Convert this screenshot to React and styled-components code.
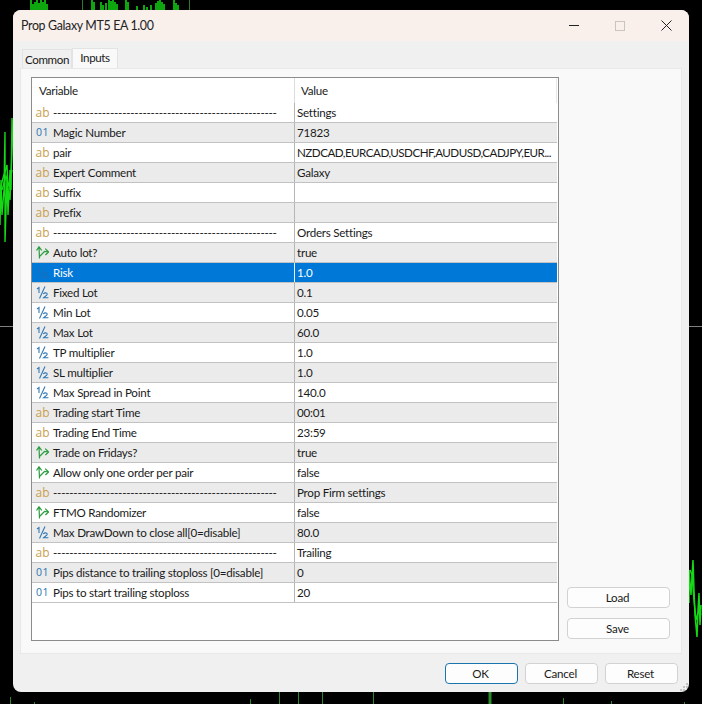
import React from "react";
import styled, { createGlobalStyle } from "styled-components";

const Global = createGlobalStyle`
  html, body { margin: 0; padding: 0; background: #000; }
  body { width: 702px; height: 704px; overflow: hidden; font-family: Lato, "Open Sans", sans-serif; }
`;

const Desktop = styled.div`
  position: relative;
  width: 702px;
  height: 704px;
  background: #000;
  overflow: hidden;
`;

const ChartLayer = styled.svg`
  position: absolute;
  inset: 0;
`;

const Dialog = styled.div`
  position: absolute;
  left: 13px;
  top: 10px;
  width: 676px;
  height: 682px;
  border-radius: 8px;
  overflow: hidden;
  background: #f0f0f0;
  display: flex;
  flex-direction: column;
  color: #1a1a1a;
  font-size: 11.6px;
  letter-spacing: -0.24px;
`;

const TitleBar = styled.div`
  height: 31px;
  background: #f9efeb;
  display: flex;
  align-items: center;
  padding-left: 8px;
  flex: none;
`;

const Title = styled.div`
  flex: 1;
  font-size: 12.4px;
  letter-spacing: -0.34px;
  color: #222;
`;

const Caption = styled.button`
  width: 46px;
  height: 31px;
  border: 0;
  padding: 0;
  background: none;
  display: flex;
  align-items: center;
  justify-content: center;
`;

const Tabs = styled.div`
  height: 27px;
  display: flex;
  align-items: flex-end;
  padding-left: 9px;
  flex: none;
`;

const Tab = styled.div`
  height: ${(p) => (p.$active ? 20 : 19)}px;
  width: ${(p) => p.$w}px;
  box-sizing: border-box;
  background: ${(p) => (p.$active ? "#f9f9f9" : "#f0f0f0")};
  border: 1px solid #e3e3e3;
  border-bottom: 0;
  display: flex;
  align-items: center;
  justify-content: center;
  letter-spacing: -0.4px;
  padding-bottom: ${(p) => (p.$active ? 3 : 0)}px;
`;

const Panel = styled.div`
  margin: 0 7px;
  height: 586px;
  box-sizing: border-box;
  background: #f9f9f9;
  border: 1px solid #e8e8e8;
  padding: 8px 10px 12px 10px;
  display: flex;
  gap: 8px;
  flex: none;
`;

const List = styled.div`
  width: 528px;
  height: 564px;
  box-sizing: border-box;
  border: 1px solid #8b8b8b;
  background: #fff;
  flex: none;
`;

const Head = styled.div`
  height: 25px;
  width: 525px;
  display: grid;
  grid-template-columns: 262px 263px;
  line-height: 25px;
`;

const HeadCell = styled.div`
  padding-left: ${(p) => p.$pad}px;
  height: 25px;
  box-sizing: border-box;
  border-left: ${(p) => (p.$div ? "1px solid #dcdcdc" : "0")};
  border-right: ${(p) => (p.$div ? "1px solid #e8e8e8" : "0")};
  color: #222;
`;

const Row = styled.div`
  height: 20px;
  width: 525px;
  box-sizing: border-box;
  display: grid;
  grid-template-columns: 262px 263px;
  border-bottom: 1px solid #c2c2c2;
  background: ${(p) => (p.$sel ? "#0078d7" : p.$alt ? "#ebebeb" : "#fff")};
  color: ${(p) => (p.$sel ? "#fff" : "#1a1a1a")};
  line-height: 19px;
`;

const NameCell = styled.div`
  display: flex;
  align-items: center;
  padding-left: 4px;
  gap: 4px;
  white-space: nowrap;
  overflow: hidden;
`;

const ValueCell = styled.div`
  border-left: 1px solid ${(p) => (p.$sel ? "#e9f2fb" : "#b5b5b5")};
  padding-left: 2px;
  white-space: nowrap;
  overflow: hidden;
  letter-spacing: ${(p) => (p.$long ? "-0.5px" : "inherit")};
`;

const IconBox = styled.span`
  width: 13px;
  height: 13px;
  flex: none;
  display: flex;
  align-items: center;
  justify-content: center;
`;

const Side = styled.div`
  flex: 1;
  display: flex;
  flex-direction: column;
  justify-content: flex-end;
  gap: 10px;
  padding-bottom: 2px;
`;

const Btn = styled.button`
  box-sizing: border-box;
  height: 21px;
  width: ${(p) => p.$w || 103}px;
  background: #fdfdfd;
  border: 1px solid ${(p) => (p.$primary ? "#1a74ae" : "#d2d2d2")};
  border-radius: 4px;
  font: inherit;
  letter-spacing: inherit;
  color: #1a1a1a;
  padding: 0 2px 0 0;
`;

const Footer = styled.div`
  flex: 1;
  display: flex;
  justify-content: flex-end;
  align-items: flex-start;
  gap: 7px;
  padding: 9px 11px 0 0;
`;

const Grip = styled.svg`
  position: absolute;
  right: 1px;
  bottom: 1px;
`;

const TypeText = styled.span`
  font-family: "Open Sans", sans-serif;
  font-size: ${(p) => p.$size}px;
  letter-spacing: ${(p) => p.$track}px;
  color: ${(p) => p.$color};
  line-height: 13px;
`;

const DASHES = "-".repeat(55);

const rows = [
  ["ab", DASHES, "Settings"],
  ["01", "Magic Number", "71823"],
  ["ab", "pair", "NZDCAD,EURCAD,USDCHF,AUDUSD,CADJPY,EUR..."],
  ["ab", "Expert Comment", "Galaxy"],
  ["ab", "Suffix", ""],
  ["ab", "Prefix", ""],
  ["ab", DASHES, "Orders Settings"],
  ["arrow", "Auto lot?", "true"],
  ["half", "Risk", "1.0", true],
  ["half", "Fixed Lot", "0.1"],
  ["half", "Min Lot", "0.05"],
  ["half", "Max Lot", "60.0"],
  ["half", "TP multiplier", "1.0"],
  ["half", "SL multiplier", "1.0"],
  ["half", "Max Spread in Point", "140.0"],
  ["ab", "Trading start Time", "00:01"],
  ["ab", "Trading End Time", "23:59"],
  ["arrow", "Trade on Fridays?", "true"],
  ["arrow", "Allow only one order per pair", "false"],
  ["ab", DASHES, "Prop Firm settings"],
  ["arrow", "FTMO Randomizer", "false"],
  ["half", "Max DrawDown to close all[0=disable]", "80.0"],
  ["ab", DASHES, "Trailing"],
  ["01", "Pips distance to trailing stoploss [0=disable]", "0"],
  ["01", "Pips to start trailing stoploss", "20"],
];

function TypeIcon({ kind, selected }) {
  if (kind === "ab") return <IconBox><TypeText $size={12} $track={0} $color="#c9a050">ab</TypeText></IconBox>;
  if (kind === "01") return <IconBox><TypeText $size={10.5} $track={0.6} $color="#2a74b0">01</TypeText></IconBox>;
  if (kind === "arrow") {
    return (
      <IconBox>
        <svg width="13" height="13" viewBox="0 0 13 13" fill="none" stroke="#2a9d3e" strokeWidth="1.2">
          <path d="M3.5 12.5 L3 1 M0.5 4.5 L3 0.8 L5.8 4.5" />
          <path d="M3.5 10.5 L8.5 5.5 L12.5 6 M9.2 2.6 L12.6 6 L9.4 9" />
        </svg>
      </IconBox>
    );
  }
  const c = selected ? "#1a6fb8" : "#2f78b4";
  return (
    <IconBox>
      <svg width="13" height="13" viewBox="0 0 13 13" fill="none" stroke={c} strokeWidth="1.1">
        <path d="M1 3 L3 1.6 L3 7" />
        <path d="M9 0.5 L3.5 12.5" />
        <path d="M7.3 8 Q8.4 6.6 10.2 7 Q11.9 7.6 10.7 9.2 L7.6 11.8 L12.4 11.8" />
      </svg>
    </IconBox>
  );
}

// Price trace fragments of the chart behind the dialog, with its crosshair
const leftTraces = [
  "M12 118 L11 190 L10 170 L8 215 L7 178 L5 242 L5 132 L4 190 L2 215 L1 180 L0 225",
  "M0 190 L3 178 L5 172 L7 165 L8 190 L10 200 L12 150 L13 120",
  "M2 190 L6 176 L9 186 L12 170",
];
const rightTraces = [
  "M689 603 L689 570 L691 595 L693 560 L694 590 L695 615 L697 637 L698 610 L699 593 L700 625 L701 605",
  "M690 570 L692 575 L694 600 L696 620 L699 610 L701 615",
];
const topClumps = [
  [31, 0], [33, 4], [35, 2], [37, 0], [39, 3], [41, 0], [43, 2], [45, 0], [47, 4],
  [92, 0], [94, 2],
  [101, 2], [103, 5], [106, 3], [109, 0], [111, 1], [113, 0], [115, 2], [117, 4],
  [126, 0], [128, 2], [137, 6], [144, 5], [147, 7], [151, 5],
  [156, 3], [158, 1], [160, 0], [162, 2], [164, 4], [174, 0], [176, 3], [178, 5],
];
const bottomTicks = [[10, 697], [34, 702], [250, 699], [279, 692], [298, 692], [322, 692], [373, 692], [563, 698], [611, 701], [684, 702]];

function Chart() {
  return (
    <ChartLayer width="702" height="704" viewBox="0 0 702 704">
      <line x1="0" y1="326.5" x2="13" y2="326.5" stroke="#808080" />
      <line x1="689" y1="326.5" x2="702" y2="326.5" stroke="#808080" />
      {leftTraces.map((d) => (
        <path key={d} d={d} stroke="#16d916" strokeWidth="1.4" fill="none" />
      ))}
      {rightTraces.map((d) => (
        <path key={d} d={d} stroke="#16d916" strokeWidth="1.5" fill="none" />
      ))}
      {topClumps.map(([x, y]) => (
        <line key={x} x1={x} y1={y} x2={x} y2="10" stroke="#12d012" strokeWidth="1.6" />
      ))}
      <line x1="82.5" y1="0" x2="82.5" y2="10" stroke="#2b7a2b" />
      <line x1="189.5" y1="0" x2="189.5" y2="10" stroke="#2b7a2b" />
      {bottomTicks.map(([x, y]) => (
        <line key={x} x1={x + 0.5} y1={y} x2={x + 0.5} y2="704" stroke="#2b8a2b" />
      ))}
      <line x1="490" y1="692" x2="490" y2="704" stroke="#2b8a2b" strokeWidth="3" />
    </ChartLayer>
  );
}

export default function App() {
  return (
    <Desktop>
      <Global />
      <Chart />
      <Dialog>
        <TitleBar>
          <Title>Prop Galaxy MT5 EA 1.00</Title>
          <Caption aria-label="Minimize">
            <svg width="10" height="10" viewBox="0 0 10 10"><path d="M0 4.5H10" stroke="#222" /></svg>
          </Caption>
          <Caption aria-label="Maximize">
            <svg width="10" height="10" viewBox="0 0 10 10"><rect x="0.5" y="0.5" width="9" height="9" fill="none" stroke="#c8c4c2" /></svg>
          </Caption>
          <Caption aria-label="Close">
            <svg width="11" height="11" viewBox="0 0 11 11"><path d="M0.5 0.5L10.5 10.5M10.5 0.5L0.5 10.5" stroke="#222" /></svg>
          </Caption>
        </TitleBar>
        <Tabs>
          <Tab $w={50}>Common</Tab>
          <Tab $active $w={46}>Inputs</Tab>
        </Tabs>
        <Panel>
          <List>
            <Head>
              <HeadCell $pad={7}>Variable</HeadCell>
              <HeadCell $pad={6} $div>Value</HeadCell>
            </Head>
            {rows.map(([kind, name, value, sel], i) => (
              <Row key={i} $alt={i % 2 === 1} $sel={sel}>
                <NameCell>
                  <TypeIcon kind={kind} selected={sel} />
                  {name}
                </NameCell>
                <ValueCell $sel={sel} $long={value.length > 30}>{value}</ValueCell>
              </Row>
            ))}
          </List>
          <Side>
            <Btn>Load</Btn>
            <Btn>Save</Btn>
          </Side>
        </Panel>
        <Footer>
          <Btn $primary $w={73}>OK</Btn>
          <Btn $w={73}>Cancel</Btn>
          <Btn $w={73}>Reset</Btn>
        </Footer>
        <Grip width="8" height="8" viewBox="0 0 8 8" fill="#c4c4c4">
          <rect x="6" y="0" width="2" height="2" />
          <rect x="3" y="3" width="2" height="2" />
          <rect x="6" y="3" width="2" height="2" />
          <rect x="0" y="6" width="2" height="2" />
          <rect x="3" y="6" width="2" height="2" />
          <rect x="6" y="6" width="2" height="2" />
        </Grip>
      </Dialog>
    </Desktop>
  );
}
